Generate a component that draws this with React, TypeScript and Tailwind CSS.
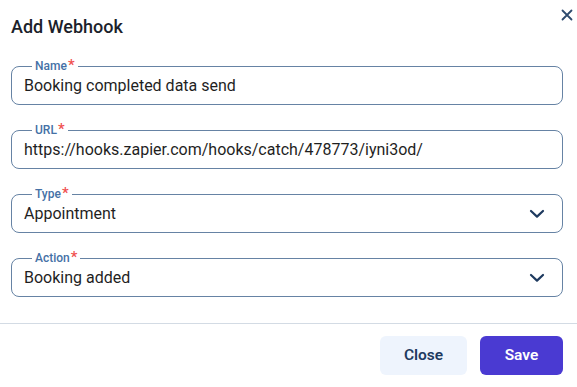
import { useState } from 'react';

type Campo = {
  rotulo: string;
  valor: string;
  lista?: boolean;
};

const campos: Campo[] = [
  { rotulo: 'Name', valor: 'Booking completed data send' },
  { rotulo: 'URL', valor: 'https://hooks.zapier.com/hooks/catch/478773/iyni3od/' },
  { rotulo: 'Type', valor: 'Appointment', lista: true },
  { rotulo: 'Action', valor: 'Booking added', lista: true },
];

const Chevron = () => (
  <svg width="16" height="10" viewBox="0 0 16 10" fill="none" className="shrink-0">
    <path d="M2 2l6 5.6L14 2" stroke="#1e3a5f" strokeWidth="2.2" strokeLinecap="round" strokeLinejoin="round" />
  </svg>
);

const CampoContorno = ({ campo }: { campo: Campo }) => {
  const [valor, setValor] = useState(campo.valor);

  return (
    <div className="relative h-[39px] rounded-lg border border-[#6683a4] flex items-center pl-3 pr-[17px] pt-[1px]">
      <span className="absolute -top-[9px] left-5 bg-white px-[3px] flex items-start text-[12px] font-medium leading-4 text-[#4571a6]">
        {campo.rotulo}
        <span className="text-[#f05050] text-[15px] leading-4 ml-[1px] -mt-[1px]">*</span>
      </span>
      {campo.lista ? (
        <div className="flex-1 flex items-center justify-between text-[16px] text-[#1f1f1f]">
          <span>{valor}</span>
          <Chevron />
        </div>
      ) : (
        <input
          value={valor}
          onChange={(e) => setValor(e.target.value)}
          className="flex-1 bg-transparent outline-none text-[16px] text-[#1f1f1f]"
        />
      )}
    </div>
  );
};

export default function App() {
  return (
    <div
      className="w-[577px] h-[387px] bg-white flex flex-col overflow-hidden"
      style={{ fontFamily: 'Roboto, "Liberation Sans", sans-serif' }}
    >
      <div className="flex items-start justify-between pl-[11px] pr-[1px] pt-[15px]">
        <h2 className="text-[18px] font-medium text-[#1c1f2b] leading-6">
          Add Webhook
        </h2>
        <button className="mt-[-9px] p-[3px]">
          <svg width="12" height="12" viewBox="0 0 12 12" fill="none">
            <path d="M1.5 1.5l9 9M10.5 1.5l-9 9" stroke="#2d4a6e" strokeWidth="1.8" strokeLinecap="round" />
          </svg>
        </button>
      </div>

      <div className="flex flex-col gap-[25px] pl-[11px] pr-[14px] pt-[27px]">
        {campos.map((c) => (
          <CampoContorno key={c.rotulo} campo={c} />
        ))}
      </div>

      <div className="mt-[26px] border-t border-[#d3dbe4]" />

      <div className="flex justify-end gap-[13px] pr-[14px] pt-[12px]">
        <button className="w-[87px] h-[39px] rounded-md bg-[#eef4fd] text-[#1e3a5f] text-[15.5px] font-semibold">
          Close
        </button>
        <button className="w-[83px] h-[39px] rounded-md bg-[#4a3ad2] text-white text-[15.5px] font-semibold">
          Save
        </button>
      </div>
    </div>
  );
}
